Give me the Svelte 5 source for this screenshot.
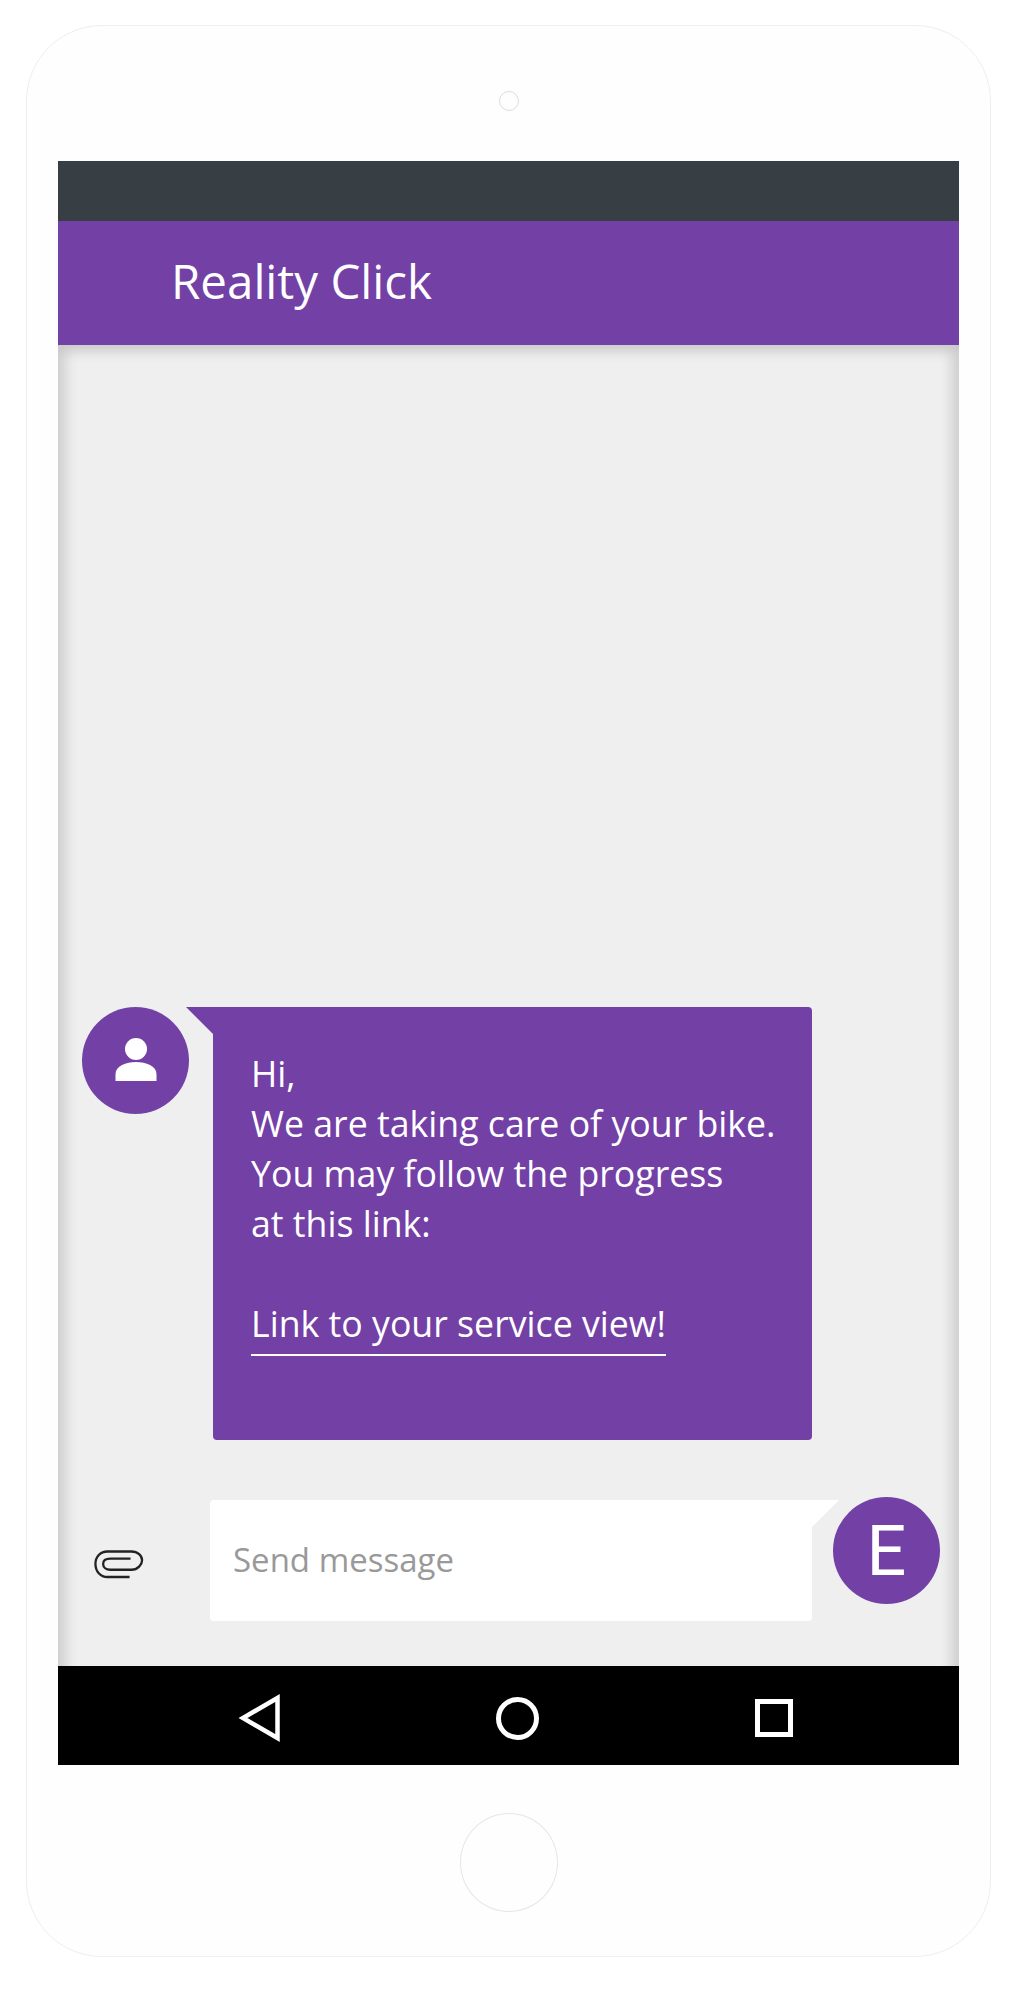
<script>
  const lines = ['Hi,', 'We are taking care of your bike.', 'You may follow the progress', 'at this link:'];
</script>

<div class="phone">
  <div class="camera"></div>

  <div class="screen">
    <div class="status"></div>
    <header class="appbar">Reality Click</header>

    <main class="chat">
      <div class="incoming">
        <div class="avatar">
          <svg width="46" height="46" viewBox="0 0 46 46" fill="#fff">
            <circle cx="23" cy="12" r="11" />
            <path d="M2.500 44 V37 C2.500 29 13 25 23 25 S43.500 29 43.500 37 V44 Z" />
          </svg>
        </div>
        <div class="bubble">
          {#each lines as line}
            <div>{line}</div>
          {/each}
          <div class="gap"></div>
          <span class="link">Link to your service view!</span>
        </div>
      </div>

      <div class="composer">
        <div class="clip">
          <svg width="50" height="30" viewBox="0 0 52 30" fill="none" stroke="#222" stroke-width="2.400">
            <path d="M37 28.500 H14 C6.500 28.500 1.500 22.500 1.500 15 S6.500 2 14 2 H39 C45.500 2 50 6.500 50 11 S45.500 21 39 21 H17 C12.500 21 9.500 18.500 9.500 15 S12.500 9.500 17 9.500 H38" />
          </svg>
        </div>
        <div class="input">Send message</div>
        <div class="avatar letter">E</div>
      </div>
    </main>

    <nav class="navbar">
      <svg width="42" height="48" viewBox="0 0 42 48" fill="none" stroke="#fff" stroke-width="4.500">
        <path d="M39.500 4 V44 L5 24 Z" />
      </svg>
      <div class="home"></div>
      <div class="recents"></div>
    </nav>
  </div>

  <div class="homebtn"></div>
</div>

<style>
  :global(body) {
    background: #fff;
  }

  .phone {
    box-sizing: border-box;
    width: 965px;
    height: 1932px;
    margin: 25px 0 0 26px;
    padding-top: 65px;
    background: #fefefe;
    border: 1.500px solid #eee;
    border-radius: 76px;
    font-family: "Open Sans", "Noto Sans", sans-serif;
  }

  .camera {
    box-sizing: border-box;
    width: 20px;
    height: 20px;
    margin: 0 auto;
    border: 1px solid #ddd;
    border-radius: 50%;
  }

  .screen {
    display: flex;
    flex-direction: column;
    width: 901px;
    height: 1604px;
    margin: 50px 0 0 31px;
  }

  .status {
    height: 60px;
    background: #373f44;
  }

  .appbar {
    height: 124px;
    padding-left: 113px;
    background: #7340a6;
    color: #fff;
    font-size: 47.500px;
    line-height: 120px;
  }

  .chat {
    flex: 1;
    display: flex;
    flex-direction: column;
    justify-content: flex-end;
    background: #efefef;
    box-shadow:
      inset 0 16px 12px -10px #c8c8c8,
      inset 20px 0 12px -12px #d0d0d0,
      inset -20px 0 12px -12px #d0d0d0;
  }

  .incoming {
    display: flex;
    align-items: flex-start;
    gap: 24px;
    padding-left: 24px;
  }

  .avatar {
    flex: none;
    display: flex;
    align-items: center;
    justify-content: center;
    width: 107px;
    height: 107px;
    border-radius: 50%;
    background: #7340a6;
  }

  .avatar svg {
    margin-bottom: 2px;
  }

  .letter {
    color: #fff;
    font-family: Roboto, "Open Sans", sans-serif;
    font-size: 70px;
    line-height: 1;
  }

  .bubble {
    position: relative;
    box-sizing: border-box;
    width: 599px;
    height: 433px;
    padding: 41px 0 0 38px;
    border-radius: 0 4px 4px 4px;
    background: #7340a6;
    color: #fff;
    font-size: 35.700px;
    line-height: 50px;
  }

  .bubble::before {
    content: "";
    position: absolute;
    top: 0;
    left: -27px;
    width: 27px;
    height: 27px;
    background: #7340a6;
    clip-path: polygon(0 0, 100% 0, 100% 100%);
  }

  .gap {
    height: 50px;
  }

  .link {
    display: inline-block;
    height: 56px;
    border-bottom: 2px solid #fff;
  }

  .composer {
    display: flex;
    align-items: flex-start;
    margin-top: 57px;
    padding: 0 0 45px 36px;
  }

  .clip {
    flex: none;
    width: 116px;
    padding-top: 52px;
  }

  .input {
    position: relative;
    box-sizing: border-box;
    width: 602px;
    height: 121px;
    margin-top: 3px;
    padding-left: 23px;
    border-radius: 4px 0 4px 4px;
    background: #fff;
    color: #999;
    font-size: 33px;
    line-height: 120px;
  }

  .input::after {
    content: "";
    position: absolute;
    top: 0;
    right: -27px;
    width: 27px;
    height: 27px;
    background: #fff;
    clip-path: polygon(0 0, 100% 0, 0 100%);
  }

  .composer .avatar {
    margin-left: 21px;
  }

  .navbar {
    box-sizing: border-box;
    display: grid;
    grid-template-columns: repeat(3, auto);
    align-items: center;
    justify-content: start;
    height: 99px;
    padding: 5px 0 0 180px;
    background: #000;
  }

  .home {
    box-sizing: border-box;
    width: 43px;
    height: 43px;
    margin-left: 216px;
    border: 5px solid #fff;
    border-radius: 50%;
  }

  .recents {
    box-sizing: border-box;
    width: 38px;
    height: 38px;
    margin-left: 216px;
    border: 5px solid #fff;
  }

  .homebtn {
    box-sizing: border-box;
    width: 98px;
    height: 99px;
    margin: 48px auto 0;
    border: 1px solid #e6e6e6;
    border-radius: 50%;
  }
</style>
